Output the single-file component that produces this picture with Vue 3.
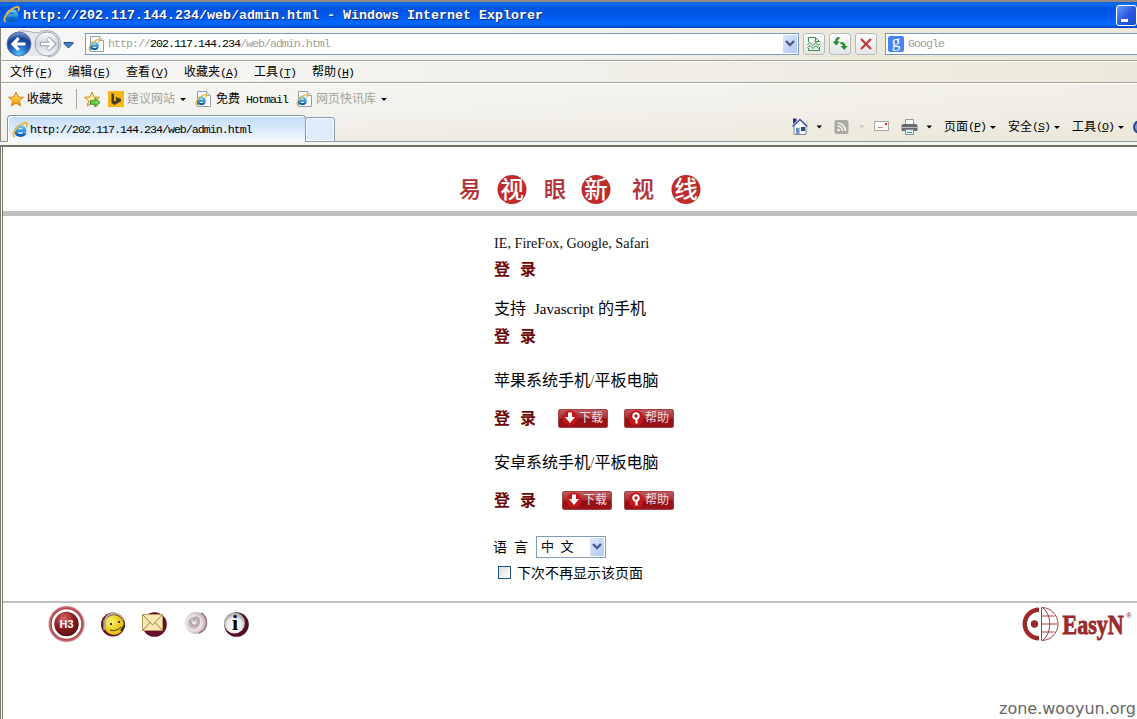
<script setup>
const menus = [['文件', 'F'], ['编辑', 'E'], ['查看', 'V'], ['收藏夹', 'A'], ['工具', 'T'], ['帮助', 'H']]
const commands = [['页面', 'P'], ['安全', 'S'], ['工具', 'O']]
const logo = [
  { c: '易', x: 30 }, { c: '视', x: 72, on: true }, { c: '眼', x: 115 },
  { c: '新', x: 156, on: true }, { c: '视', x: 203 }, { c: '线', x: 246, on: true },
]
const phones = [{ name: '苹果', cls: 'apple' }, { name: '安卓', cls: 'android' }]
</script>

<template>
  <svg class="defs" width="0" height="0">
    <defs>
      <linearGradient id="gold" x2="0" y2="1"><stop offset="0" stop-color="#fff08a" /><stop offset=".5" stop-color="#fbc02c" /><stop offset="1" stop-color="#ee8a12" /></linearGradient>
      <linearGradient id="pale" x2="0" y2="1"><stop offset="0" stop-color="#fffbd8" /><stop offset="1" stop-color="#f8d568" /></linearGradient>
      <linearGradient id="ieb" x2="0" y2="1"><stop offset="0" stop-color="#62c6f6" /><stop offset="1" stop-color="#0c5cae" /></linearGradient>
      <radialGradient id="back" cy=".95" r=".9"><stop offset="0" stop-color="#56c4fa" /><stop offset=".45" stop-color="#1e66c0" /><stop offset=".75" stop-color="#153f92" /><stop offset="1" stop-color="#6f8fc6" /></radialGradient>
      <linearGradient id="fwd" x2="0" y2="1"><stop offset="0" stop-color="#fafbfd" /><stop offset=".5" stop-color="#cfd6e0" /><stop offset="1" stop-color="#f4f7fb" /></linearGradient>
      <radialGradient id="h3" cx=".4" cy=".3" r=".75"><stop offset="0" stop-color="#d66a6a" /><stop offset=".5" stop-color="#8c1c20" /><stop offset="1" stop-color="#4c080c" /></radialGradient>
      <radialGradient id="halo"><stop offset=".8" stop-color="#a93a3e" /><stop offset=".92" stop-color="#cc8084" /><stop offset="1" stop-color="#fff" stop-opacity="0" /></radialGradient>
      <radialGradient id="face" cx=".35" cy=".35"><stop offset="0" stop-color="#fff27a" /><stop offset="1" stop-color="#e8c412" /></radialGradient>
      <radialGradient id="pearl" cx=".4" cy=".5"><stop offset="0" stop-color="#f4eeee" /><stop offset=".4" stop-color="#c4b4b6" /><stop offset=".65" stop-color="#eee8e8" /><stop offset="1" stop-color="#c8b8be" /></radialGradient>
      <radialGradient id="silver" cx=".5" cy=".6"><stop offset="0" stop-color="#fff" /><stop offset=".7" stop-color="#eceeee" /><stop offset="1" stop-color="#aab2b4" /></radialGradient>
      <symbol id="e" viewBox="0 0 16 16">
        <path d="M13 10.800C11.600 14.400 3.800 14.600 3.800 8.900C3.800 3.200 13 3.200 12.800 8.800H5.200" fill="none" stroke="url(#ieb)" stroke-width="3" />
        <path d="M2.800 14.700C-1.500 14.200 3.700 4.500 11 1.500C15.500-.2 15.800 2.200 14.300 4.800" fill="none" stroke="#eeb535" stroke-width="1.700" />
      </symbol>
      <symbol id="page-e" viewBox="0 0 16 16">
        <path d="M2.500 .5H11.500L15.500 4.500V15.500H2.500Z" fill="#fdfdfd" stroke="#989ea8" /><path d="M11.500 .5V4.500H15.500" fill="#e2e2e2" stroke="#a8a8a8" />
        <use href="#e" x="0" y="3" width="12" height="12" />
      </symbol>
      <symbol id="star" viewBox="0 0 16 16">
        <path d="M8 1L10.100 6L15.500 6.300L11.400 9.700L12.800 15L8 12.200L3.200 15L4.600 9.700L.5 6.300L5.900 6Z" stroke="#d18a1c" stroke-width="1" stroke-linejoin="round" />
      </symbol>
    </defs>
  </svg>

  <div class="window">
    <header class="title">
      <svg width="17" height="17"><use href="#e" /></svg>
      <span>http://202.117.144.234/web/admin.html - Windows Internet Explorer</span>
      <i class="min"></i>
    </header>

    <div class="nav">
      <svg class="travel" width="72" height="32" viewBox="0 0 72 32">
        <path d="M14 3C25 2 28 6 34 4.500C38 2.500 40 2.500 43 2.700A12.500 13 0 0 1 43 29H14Z" fill="#e6e8ea" stroke="#a8adb2" />
        <path d="M14 29H43" stroke="#f7f7f8" stroke-width="2" />
        <circle cx="14" cy="16" r="12" fill="url(#back)" stroke="#5a74a4" /><circle cx="42" cy="16" r="12" fill="url(#fwd)" stroke="#9aa1aa" />
        <path d="M20.500 16H8.500M13.700 10.200L8 16L13.700 21.800" fill="none" stroke="#fff" stroke-width="3.200" />
        <path d="M35 16H48M42.700 10.200L48.500 16L42.700 21.800" fill="none" stroke="#9ba2ac" stroke-width="4.400" /><path d="M36 16H48M43 10.700L48.200 16L43 21.300" fill="none" stroke="#fff" stroke-width="2.700" />
        <path d="M59 14.500H68V15.500L63.500 20L59 15.500Z" fill="#3f82c0" stroke="#164578" stroke-width=".9" />
      </svg>
      <div class="address">
        <svg width="16" height="16"><use href="#page-e" /></svg>
        <span class="la">http://<b>202.117.144.234</b>/web/admin.html</span>
        <i class="drop"><svg width="14" height="18"><path d="M3 6L7 10L11 6" /></svg></i>
      </div>
      <i class="btn"><svg width="16" height="16" fill="none" stroke="#3c8e44"><path d="M2.500 6V1.500H9.500L13.500 5.500V6M9.500 1.500V5.500H13.500M2.500 12V14.500H13.500V12M1.500 8.500L4 6.500L7 9.500L10 6.500L12.500 9.500L14.500 7.500M1.500 11.500L4 9.500L7 12.500L10 9.500L12.500 12.500L14.500 10.500" /></svg></i>
      <i class="btn"><svg width="16" height="16" fill="#2c8a32"><path d="M7.500 1V3Q5.500 3 5.500 5.500H8L4.200 9.500L.5 5.500H3Q3 1 7.500 1Z" /><path d="M8.500 6Q13.500 6 13.500 10H15.800L12.200 14L8.500 10H11Q11 8 8.500 8Z" /></svg></i>
      <i class="btn"><svg width="16" height="16" fill="none" stroke="#c33c40" stroke-width="2.300"><path d="M3 3L13 13M13 3L3 13" /></svg></i>
      <div class="search"><i class="g">g</i><span class="la">Google</span></div>
    </div>

    <nav class="menu">
      <span v-for="m in menus" :key="m[1]">{{ m[0] }}<span class="la">(<u>{{ m[1] }}</u>)</span></span>
    </nav>

    <div class="lower">
      <div class="favs">
        <svg width="16" height="16" fill="url(#gold)"><use href="#star" /></svg><span class="f1">收藏夹</span><i class="sep"></i>
        <svg class="add" width="17" height="17"><use href="#star" width="16" height="16" fill="url(#pale)" /><path d="M6.500 9.800H11V7L16 11.500L11 16V13.200H6.500Z" fill="#7bd051" stroke="#2b8b2c" /></svg>
        <svg class="bing" width="16" height="16"><path d="M0 0H16V16H0Z" fill="#f7b719" /><path d="M3.500 2L6 3V10.500L8.500 9.200L7.200 5.800L13 8V10.300L6.500 14L3.500 12Z" fill="#463c28" /></svg>
        <span class="dim f2">建议网站</span><i class="arr a1"></i>
        <svg class="p1" width="16" height="16"><use href="#page-e" /></svg><span class="f3">免费<span class="la"> Hotmail</span></span>
        <svg class="p2" width="16" height="16"><use href="#page-e" /></svg><span class="dim f4">网页快讯库</span><i class="arr a2"></i>
      </div>
      <div class="tabs">
        <div class="tab"><svg width="16" height="16"><use href="#e" /></svg><span class="la">http://202.117.144.234/web/admin.html</span></div>
        <div class="newtab"></div>
        <div class="cmds">
          <svg width="142" height="20" viewBox="0 0 142 20">
            <path d="M3 9V17.500H15V9L9 3Z" fill="#f4f6fb" stroke="#8088a0" /><path d="M1.500 9.500L9 2.500L16.500 9.500" fill="none" stroke="#4a5cae" stroke-width="1.600" /><path d="M2 1.500H5.500V4L2 7Z" fill="#28308c" /><path d="M5 11H8.500V17.500H5Z" fill="#6f93b8" /><path d="M10 10H14V14H10Z" fill="#294a76" />
            <path d="M25.500 8.500H31L28.250 11.500Z" />
            <rect x="43.500" y="3" width="14" height="14" rx="2" fill="#aaa9a2" /><g fill="none" stroke="#f6f6f0" stroke-width="1.600"><path d="M46.500 9A5 5 0 0 1 51.500 14M46.500 6A8 8 0 0 1 54.500 14" /></g><circle cx="47.500" cy="13" r="1.200" fill="#fff" />
            <path d="M68.500 8.500H73L70.750 11Z" fill="#c0bfb7" />
            <path d="M83.500 4.500H97.500V13.500H83.500Z" fill="#fafafa" stroke="#a7a6a1" /><path d="M87 10.500H92" stroke="#c9888b" /><path d="M94 6H96V8H94Z" fill="#d22" />
            <path d="M114.500 2.500H122.500V8H114.500Z" fill="#fbfbfb" stroke="#999" /><path d="M110.500 9Q110.500 7 112.500 7H124.500Q126.500 7 126.500 9V14H110.500Z" fill="#666a70" /><path d="M111 10.500H126" stroke="#b9bfc5" /><path d="M114.500 12.500H122.500V17.500H114.500Z" fill="#eaf4f8" stroke="#7f8c91" /><path d="M116 15.500H121" stroke="#4c9cad" />
            <path d="M135.500 8.500H141L138.250 11.500Z" />
          </svg>
          <span v-for="c in commands" :key="c[1]" class="cmd">{{ c[0] }}<span class="la">(<u>{{ c[1] }}</u>)</span><i class="arr"></i></span>
          <i class="help"></i>
        </div>
      </div>
      <div class="edge"></div>
    </div>

    <main class="view">
      <div class="brand">
        <svg width="290" height="64" viewBox="0 0 290 64">
          <g v-for="l in logo" :key="l.x">
            <circle v-if="l.on" :cx="l.x" cy="42.500" r="14.500" fill="#be2c2c" />
            <text :x="l.x" :y="l.on ? 51 : 50" :class="{ on: l.on }">{{ l.c }}</text>
          </g>
        </svg>
      </div>
      <section class="body">
        <p class="ie">IE, FireFox, Google, Safari</p>
        <p class="login l1">登 录</p>
        <p class="js">支持<span>Javascript</span>的手机</p>
        <p class="login l2">登 录</p>
        <template v-for="p in phones" :key="p.cls">
          <p class="sys">{{ p.name }}系统手机<span>/</span>平板电脑</p>
          <div class="acts" :class="p.cls">
            <span class="login">登 录</span>
            <span class="red dl"><svg width="16" height="18"><circle cx="8" cy="9" r="7.500" fill="#c4171c" /><path d="M6 3.500H10V8H13L8 14L3 8H6Z" fill="#fff" /></svg>下载</span>
            <span class="red"><svg width="16" height="18"><circle cx="8" cy="9" r="7.500" fill="#c4171c" /><circle cx="8" cy="7" r="2.700" fill="none" stroke="#fff" stroke-width="2" /><path d="M8.500 9V14.500" stroke="#fff" stroke-width="2.200" /></svg>帮助</span>
          </div>
        </template>
        <div class="lang"><span>语 言</span><div class="select">中 文<i class="drop"><svg width="14" height="18"><path d="M3 6L7 10L11 6" /></svg></i></div></div>
        <label class="again"><i></i>下次不再显示该页面</label>
      </section>
      <footer>
        <svg width="220" height="42" viewBox="0 0 220 42">
          <circle cx="21.500" cy="21" r="19" fill="url(#halo)" /><circle cx="21.500" cy="21" r="13.500" fill="url(#h3)" stroke="#fff" stroke-width="2.600" /><text x="21.500" y="24.500" class="h3">H3</text>
          <circle cx="68" cy="21.500" r="12" fill="#650f2c" /><circle cx="69" cy="22" r="10" fill="url(#face)" /><path d="M60 17C63 9 74 8 79 17" fill="none" stroke="#b9b5a1" stroke-width="1.800" /><path d="M59.500 17V27" stroke="#aaa68e" stroke-width="2.500" /><circle cx="66" cy="21" r="1" /><circle cx="74" cy="19" r="1" /><path d="M65 27Q71 29 76 24" fill="none" stroke="#4e4300" /><path d="M79.500 22L76 28" stroke="#333" stroke-width="2" />
          <circle cx="109.500" cy="21.500" r="12.300" fill="#650f2c" /><path d="M97.500 11.500H117.500V27.500H97.500Z" fill="#fae6b2" stroke="#b69a5c" /><path d="M98 12L107.500 22L117 12M98 27L105 19.500M117 27L110 19.500" fill="none" stroke="#9d8346" />
          <circle cx="151" cy="20" r="11" fill="url(#pearl)" /><path d="M156 10A11 11 0 0 1 154 30" fill="none" stroke="#97707c" stroke-width="1.500" /><path d="M145 17C146 25 155 24 154 17C153 13 148 14 149 18" fill="none" stroke="#b3a2a5" stroke-width="1.800" />
          <circle cx="191.500" cy="21.500" r="12.300" fill="#560c29" /><circle cx="189.500" cy="20" r="10.500" fill="url(#silver)" /><text x="190" y="27" class="info">i</text>
        </svg>
        <svg class="easyn" width="116" height="42" viewBox="0 0 116 42">
          <path d="M18 4.500A16.500 16.500 0 0 0 18 37.500V33A12 12 0 0 1 18 9Z" fill="#9a2a2c" />
          <path d="M20.500 4.500A16.500 16.500 0 0 1 20.500 37.500ZM22 5C31 12 31 30 22 37M20 13H33.500M20 21H36M20 29H33.500" fill="none" stroke="#9a2a2c" stroke-width=".9" />
          <circle cx="13.500" cy="21" r="3.700" fill="#9a2a2c" />
          <text x="41.500" y="0" transform="translate(0 31) scale(1 1.2)" class="name">EasyN</text><text x="105" y="15" class="reg">®</text>
        </svg>
      </footer>
      <div class="mark">zone.wooyun.org</div>
    </main>
  </div>
</template>

<style>
html, body { margin: 0; background: #fff; overflow: hidden; }
</style>
<style scoped>
* { box-sizing: border-box; }
.defs { position: absolute; }
svg { display: block; flex: none; }
i { display: block; font-style: normal; flex: none; }
.window { width: 1137px; height: 719px; overflow: hidden; display: flex; flex-direction: column; font: 12px/16px "Liberation Sans", "Noto Sans CJK SC", sans-serif; color: #000; white-space: pre; }
.la { font-family: "Liberation Mono", monospace; font-size: 11.67px; letter-spacing: -1px; }
.title { height: 28px; flex: none; border-top: 2px solid #8f8d82; background: linear-gradient(#1b5ad0, #0b70f8 2px, #0057e4 5px, #0054e3 10px, #0466fb 20px, #0264f8 23px, #0340b4); display: flex; align-items: center; padding-left: 3px; color: #fff; font: bold 13.33px/16px "Liberation Mono", monospace; text-shadow: 1px 1px #0a2c82; }
.title span { margin: 1px 0 0 3px; }
.title svg { margin-top: -2px; }
.min { width: 21px; height: 21px; margin-left: auto; border: 1px solid #fff; border-radius: 3px; background: linear-gradient(135deg, #729cf5, #2a5be0 50%, #1949cb); padding: 13px 0 0 4px; }
.min::before { content: ""; display: block; width: 7px; height: 3px; background: #fff; }
.nav { height: 32px; flex: none; display: flex; align-items: center; padding-left: 4px; border-left: 1px solid #8b887b; background: linear-gradient(90deg, #f7f7f8, #f2f1ee 50%, #ece9da 75%); }
.address { width: 714px; height: 22px; margin-left: 8px; border: 1px solid #7c98c0; background: #fff; display: flex; align-items: center; padding: 0 1px 0 2px; color: #a2a197; }
.address .la { margin-left: 4px; }
.address b { color: #000; font-weight: normal; }
.drop { width: 14px; height: 18px; margin-left: auto; background: linear-gradient(135deg, #dde7fc, #b2c7f5); border-radius: 1px; }
.drop path { fill: none; stroke: #465c88; stroke-width: 2.3; }
.btn { width: 22px; height: 22px; margin-left: 4px; border: 1px solid #b7b9ba; border-radius: 3px; background: linear-gradient(#fff, #eef0ef 50%, #e2e6ea); padding: 2px; }
.btn svg { width: 16px; height: 16px; }
.search { height: 22px; flex: 1; margin-left: 8px; border: 1px solid #7c98c0; border-right: 0; background: #fff; display: flex; align-items: center; padding-left: 2px; color: #a2a197; }
.g { width: 16px; height: 16px; margin-right: 4px; background: #4787ed; border-radius: 2px; color: #fff; text-align: center; font: 17px/12px "Liberation Serif", serif; }
.menu { height: 23px; flex: none; border: solid #a5a498; border-width: 1px 0; box-shadow: inset 1px 0 #8b887b, inset 0 1px #fff; display: flex; align-items: center; gap: 16px; padding: 2px 0 0 10px; background: linear-gradient(90deg, #f7f7f8, #f2f1ed 40%, #ece9da); }
.lower { height: 64px; flex: none; background: linear-gradient(90deg, #f6f6f780, #f3f2ef80 25%, #ece9da80), linear-gradient(#f7f7f5, #f3f2ee 45%, #e8e5d1); box-shadow: inset 1px 0 #8b887b, inset 0 1px #fff; }
.favs { height: 32px; display: flex; align-items: center; padding: 0 0 0 8px; }
.f1 { width: 36px; margin-left: 3px; }
.sep { width: 1px; height: 20px; margin: 0 7px 0 13px; background: #a7a69b; }
.bing { margin-left: 7px; }
.dim { color: #a4a399; }
.f2 { margin-left: 3px; width: 48px; }
.arr { width: 0; height: 0; border: 3px solid transparent; border-top-color: #000; border-bottom: 0; }
.a1 { margin-left: 5px; }
.p1 { margin-left: 9px; }
.f3 { width: 72px; margin-left: 5px; }
.p2 { margin-left: 8px; }
.f4 { width: 60px; margin-left: 4px; }
.a2 { margin-left: 5px; }
.tabs { height: 27px; display: flex; align-items: flex-end; border-bottom: 1px solid #8c97aa; padding-left: 7px; }
.tab { width: 299px; height: 27px; flex: none; margin-bottom: -1px; border: 1px solid #8492aa; border-bottom: 0; border-radius: 4px 4px 0 0; background: linear-gradient(#c2dcfb, #e4effc 70%, #f8fafd); box-shadow: inset 1px 1px #fff; display: flex; align-items: center; padding: 1px 0 0 4px; }
.tab .la { margin-left: 2px; }
.newtab { width: 30px; height: 25px; flex: none; margin-left: -1px; margin-bottom: -1px; border: 1px solid #8d9bb0; border-radius: 3px 3px 0 0; background: #dfebfa; box-shadow: inset 0 0 0 1px #f6fafe; }
.cmds { height: 28px; flex: none; margin-left: 456px; display: flex; align-items: center; }
.cmd { display: flex; align-items: center; width: 64px; flex: none; }
.cmds > svg { margin-right: 11px; width: 142px; }
.cmd .arr { margin-left: 4px; }
.help { width: 14px; height: 14px; border-radius: 50%; background: #7c9ad4; border: 2px solid #28458d; margin-left: -3px; }
.edge { height: 5px; background: #f6f6f1; border-bottom: 2px solid #74736a; }
.view { flex: 1; border-left: 3px double #77746a; background: #fff; display: flex; flex-direction: column; }
.brand { height: 69px; border-bottom: 5px solid #c0c0c0; padding-left: 437px; flex: none; }
.brand text { font: 500 22px "Noto Sans CJK SC", sans-serif; fill: #b03034; stroke: #b03034; stroke-width: .2; text-anchor: middle; }
.brand .on { fill: #fff; stroke: none; font-size: 23.5px; }
.body { height: 385px; flex: none; padding: 17px 0 0 491px; font-size: 16px; }
.body p, .acts, .lang, .again { margin: 0; height: 22px; line-height: 22px; }
.body p.ie { font: 14.2px/20px "Liberation Serif", serif; color: #111; }
.login { color: #6f0709; font-weight: bold; display: block; word-spacing: 5.5px; }
.body .l1 { margin-top: 4px; }
.body .js { margin-top: 17px; }
.js span { font: 15px "Liberation Serif", serif; margin: 0 4px 0 8px; }
.body .l2 { margin-top: 6px; }
.body .sys { margin-top: 22px; }
.sys span { font-family: "Liberation Serif", serif; color: #555; }
.acts { display: flex; align-items: center; }
.body .acts { margin-top: 16px; }
.acts .login { width: 64px; }
.android .login { width: 68px; }
.red { width: 50px; height: 19px; margin-top: -2px; border: 1px solid #a64146; border-radius: 2px; background: linear-gradient(#bd5c60, #a52a2e 48%, #901014 52%, #9c1418); display: flex; align-items: center; padding-left: 3px; gap: 1px; font-size: 12px; color: #f2dcdc; }
.red.dl { margin-right: 16px; }
.android .red.dl { margin-right: 12px; }
.red svg { width: 16px; height: 18px; }
.lang { display: flex; align-items: center; font-size: 14px; }
.lang > span { width: 43px; margin-left: -1px; word-spacing: 3px; }
.select { width: 70px; height: 22px; border: 1px solid #7f9db9; display: flex; align-items: center; padding: 0 1px 0 4px; font-size: 13px; word-spacing: 3px; }
.body .lang { margin-top: 24px; }
.again { display: flex; align-items: center; padding-left: 4px; font-size: 14px; }
.again i { width: 13px; height: 13px; margin: -1px 6px 0 0; border: 1px solid #1c5180; background: linear-gradient(135deg, #dcdcd7, #fff); }
.body .again { margin-top: 4px; }
footer { height: 46px; flex: none; border-top: 2px solid #c0c0c0; display: flex; justify-content: space-between; padding-left: 42px; }
.h3 { font: bold 11px "Liberation Sans", sans-serif; fill: #fff; text-anchor: middle; }
.info { font: bold 22px "Liberation Serif", serif; text-anchor: middle; }
.name { font: bold 22px "Liberation Serif", serif; fill: #9a2a2c; stroke: #9a2a2c; stroke-width: .7; }
.reg { font: 8px "Liberation Sans", sans-serif; fill: #9a2a2c; }
.mark { margin: auto 1px 0 auto; font: 16px/20px "DejaVu Sans", sans-serif; color: #666; }
</style>
